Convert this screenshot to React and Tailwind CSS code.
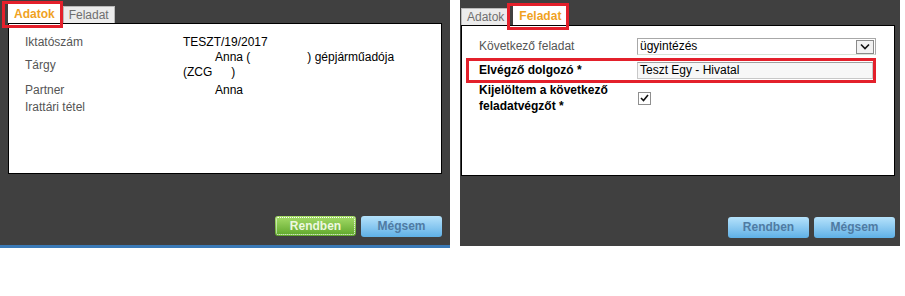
const font = { fontFamily: '"Liberation Sans", Arial, sans-serif' };

function Tab({ label, active, highlight }) {
  return (
    <div className="relative">
      <div
        className={
          active
            ? "h-[19px] bg-white px-[6px] pt-[3px] text-[12px] font-bold leading-[14px] text-[#f0a21f]"
            : "mt-[1px] h-[17px] border border-b-0 border-[#b9b9b9] bg-[#ececec] px-[5px] pt-[1px] text-[12px] leading-[14px] text-[#6f6f6f]"
        }
      >
        {label}
      </div>
      {highlight && (
        <div className="pointer-events-none absolute -top-[3px] -bottom-[5px] -left-[6px] -right-[2px] border-[3px] border-[#e3202b]" />
      )}
    </div>
  );
}

function Buttons({ okFocused }) {
  return (
    <div className="mt-auto flex justify-end gap-[5px] pb-[8px]">
      <button
        type="button"
        className={
          okFocused
            ? "relative h-[20px] w-[81px] rounded-[3px] bg-gradient-to-b from-[#a6dd68] to-[#5da528] text-[12px] font-bold leading-[20px] text-[#eef8e0]"
            : "h-[21px] w-[81px] rounded-[3px] bg-gradient-to-b from-[#b5e2fb] to-[#5eb0e6] text-[12px] font-bold leading-[21px] text-[#4f7ba3]"
        }
      >
        {okFocused && (
          <span className="pointer-events-none absolute inset-[1px] rounded-[2px] border border-dotted border-white" />
        )}
        Rendben
      </button>
      <button
        type="button"
        className="h-[21px] w-[81px] rounded-[3px] bg-gradient-to-b from-[#b5e2fb] to-[#5eb0e6] text-[12px] font-bold leading-[21px] text-[#4f7ba3]"
      >
        Mégsem
      </button>
    </div>
  );
}

export default function App() {
  return (
    <div className="flex h-[296px] w-[905px] items-start bg-white" style={font}>
      {/* left dialog */}
      <div className="flex h-[248px] w-[450px] flex-col border-b-[3px] border-[#3a79b6] bg-[#404040] pl-[8px] pr-[8px]">
        <div className="flex h-[23px] items-end gap-[2px] pt-[4px]">
          <Tab label="Adatok" active highlight />
          <Tab label="Feladat" />
        </div>
        <div className="h-[151px] w-[434px] border border-black bg-white pl-[16px] pt-[11px] text-[12px] leading-[15px]">
          <div className="flex text-[#555]">
            <span className="w-[158px]">Iktatószám</span>
            <span className="text-black">TESZT/19/2017</span>
          </div>
          <div className="flex items-center">
            <span className="w-[158px] text-[#555]">Tárgy</span>
            <div className="text-black">
              <div className="flex">
                <span className="pl-[32px]">Anna (</span>
                <span className="inline-block w-[57px]" />
                <span>) gépjárműadója</span>
              </div>
              <div className="flex">
                <span>(ZCG</span>
                <span className="inline-block w-[19px]" />
                <span>)</span>
              </div>
            </div>
          </div>
          <div className="mt-[3px] flex">
            <span className="w-[158px] text-[#555]">Partner</span>
            <span className="pl-[32px] text-black">Anna</span>
          </div>
          <div className="mt-[2px] text-[#555]">Irattári tétel</div>
        </div>
        <Buttons okFocused />
      </div>

      {/* right dialog */}
      <div className="ml-[10px] flex h-[246px] w-[440px] flex-col bg-[#404040] pl-[1px] pr-[5px]">
        <div className="flex h-[25px] items-end gap-[3px] pt-[5px]">
          <Tab label="Adatok" />
          <Tab label="Feladat" active highlight />
        </div>
        <div className="h-[151px] w-[434px] border border-black bg-white pt-[12px] text-[12px] leading-[15px]">
          <div className="flex items-center pl-[17px]">
            <span className="w-[158px] text-[#555]">Következő feladat</span>
            <div className="flex h-[17px] w-[239px] items-center justify-between border border-[#a8a8a8] border-b-[#d7e3d7] bg-white pl-[2px]">
              <span className="text-black">ügyintézés</span>
              <span className="mr-[1px] flex h-[14px] w-[18px] items-center justify-center border border-[#8a8a8a] bg-[#f2f2f2]">
                <svg width="10" height="7" viewBox="0 0 10 7">
                  <path d="M1 1.5 L5 5.5 L9 1.5" fill="none" stroke="#111" strokeWidth="1.6" />
                </svg>
              </span>
            </div>
          </div>
          <div className="ml-[4px] mt-[3px] flex h-[25px] w-[410px] items-center border-[3px] border-[#e3202b] pl-[10px]">
            <span className="w-[158px] font-bold text-black">Elvégző dolgozó *</span>
            <div className="flex h-[17px] w-[236px] items-center border border-[#c8c8c8] border-t-[#a0a0a0] bg-[#f7f7f7] pl-[2px] text-black">
              Teszt Egy - Hivatal
            </div>
          </div>
          <div className="-mt-[1px] flex items-center pl-[17px]">
            <span className="w-[158px] font-bold leading-[16px] text-black">
              Kijelöltem a következő
              <br />
              feladatvégzőt *
            </span>
            <span className="ml-[1px] flex h-[13px] w-[13px] items-center justify-center border border-[#8f8f8f] bg-white">
              <svg width="9" height="8" viewBox="0 0 9 8">
                <path d="M1 4 L3.5 6.5 L8 1" fill="none" stroke="#111" strokeWidth="1.6" />
              </svg>
            </span>
          </div>
        </div>
        <Buttons />
      </div>
    </div>
  );
}
